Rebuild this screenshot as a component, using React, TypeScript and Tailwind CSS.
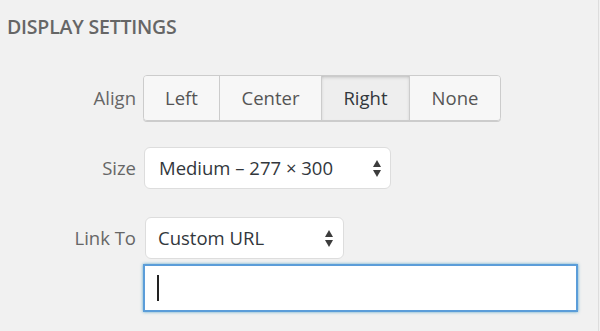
import React from "react";

function Arrows() {
  return (
    <svg width="8" height="19" viewBox="0 0 8 19" className="shrink-0">
      <path d="M4 1 L8 8 L0 8 Z" fill="#3c3c3c" />
      <path d="M0 11 L8 11 L4 18 Z" fill="#3c3c3c" />
    </svg>
  );
}

export default function App() {
  const btns = [
    { t: "Left", w: "w-[75px]" },
    { t: "Center", w: "w-[102px]" },
    { t: "Right", w: "w-[88px]", active: true },
    { t: "None", w: "w-[91px]" },
  ];
  return (
    <div
      className="w-[600px] h-[331px] bg-[#f1f1f1] overflow-hidden flex"
      style={{ fontFamily: '"Open Sans", "Noto Sans", sans-serif' }}
    >
      <div className="flex-1 flex flex-col">
        <div className="pl-[7px] pt-[14px] text-[19.5px] font-semibold text-[#666] leading-[26px] tracking-[-0.2px]">
          DISPLAY SETTINGS
        </div>

        {/* Align */}
        <div className="flex mt-[35px] h-[47px]">
          <div className="w-[136px] text-right text-[18.5px] text-[#666] pt-[11px] leading-[24px]">Align</div>
          <div className="ml-[7px] flex h-[46px] rounded-[4px] border border-[#ccc] shadow-[0_1px_0_#ccc] overflow-hidden">
            {btns.map((b, i) => (
              <div
                key={b.t}
                className={`${b.w} flex items-center justify-center text-[18.5px] text-[#555] ${
                  i > 0 ? "border-l border-[#ccc]" : ""
                } ${
                  b.active
                    ? "bg-[#eeeeee] shadow-[inset_0_2px_5px_-3px_rgba(0,0,0,0.5)] border-[#999] text-[#32373c]"
                    : "bg-[#f7f7f7]"
                }`}
              >
                {b.t}
              </div>
            ))}
          </div>
        </div>

        {/* Size */}
        <div className="flex mt-[25px] h-[42px]">
          <div className="w-[136px] text-right text-[18.5px] text-[#666] pt-[9px] leading-[24px]">Size</div>
          <div className="ml-[8px] w-[247px] h-[42px] bg-white border border-[#ddd] rounded-[6px] flex items-center pl-[14px] pr-[9px] text-[18.5px] text-[#32373c]">
            <span className="flex-1">Medium – 277 × 300</span>
            <Arrows />
          </div>
        </div>

        {/* Link To */}
        <div className="flex mt-[28px] h-[42px]">
          <div className="w-[136px] text-right text-[18.5px] text-[#666] pt-[9px] leading-[24px]">Link To</div>
          <div className="ml-[9px] w-[199px] h-[42px] bg-white border border-[#ddd] rounded-[6px] flex items-center pl-[12px] pr-[10px] text-[18.5px] text-[#32373c]">
            <span className="flex-1">Custom URL</span>
            <Arrows />
          </div>
        </div>

        {/* Input */}
        <div className="mt-[5px] ml-[143px] w-[435px] h-[48px] bg-white border-2 border-[#5b9dd9] shadow-[0_0_3px_rgba(30,140,190,0.7)] flex items-center pl-[12px]">
          <div className="w-[2px] h-[26px] bg-[#222]" />
        </div>
      </div>
      <div className="w-[1px] bg-[#dddddd] mr-[1px]" />
    </div>
  );
}
